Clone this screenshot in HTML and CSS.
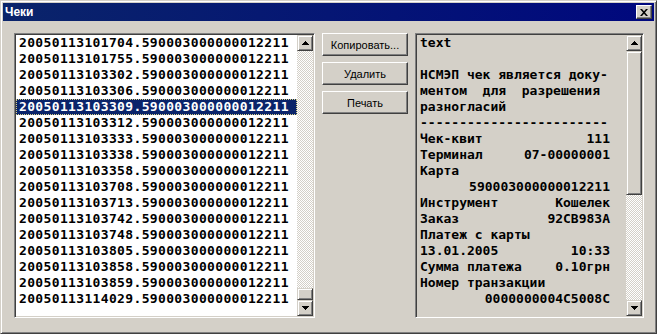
FILE: index.html
```html
<!DOCTYPE html>
<html lang="ru">
<head>
    <meta charset="UTF-8">
    <title>Чеки</title>
    <link rel="stylesheet" href="styles.css">
</head>
<body>
    <div class="window">
        <div class="titlebar">
            <span class="title">Чеки</span>
            <button class="close-btn">
                <svg width="8" height="7" viewBox="0 0 8 7"><path d="M0 0h2l2 2.2L6 0h2L5 3.5 8 7H6L4 4.8 2 7H0l3-3.5z"/></svg>
            </button>
        </div>

        <div class="client">
            <!-- список чеков -->
            <div class="listbox">
                <ul class="items">
                    <li class="item">20050113101704.590003000000012211</li>
                    <li class="item">20050113101755.590003000000012211</li>
                    <li class="item">20050113103302.590003000000012211</li>
                    <li class="item">20050113103306.590003000000012211</li>
                    <li class="item selected">20050113103309.590003000000012211</li>
                    <li class="item">20050113103312.590003000000012211</li>
                    <li class="item">20050113103333.590003000000012211</li>
                    <li class="item">20050113103338.590003000000012211</li>
                    <li class="item">20050113103358.590003000000012211</li>
                    <li class="item">20050113103708.590003000000012211</li>
                    <li class="item">20050113103713.590003000000012211</li>
                    <li class="item">20050113103742.590003000000012211</li>
                    <li class="item">20050113103748.590003000000012211</li>
                    <li class="item">20050113103805.590003000000012211</li>
                    <li class="item">20050113103858.590003000000012211</li>
                    <li class="item">20050113103859.590003000000012211</li>
                    <li class="item">20050113114029.590003000000012211</li>
                </ul>
                <div class="vscroll">
                    <div class="sb-btn"><svg width="7" height="4" viewBox="0 0 7 4"><path d="M3 0h1v1h1v1h1v1h1v1H0V3h1V2h1V1h1z"/></svg></div>
                    <div class="sb-track at-end"><div class="thumb thumb-small"></div></div>
                    <div class="sb-btn"><svg width="7" height="4" viewBox="0 0 7 4"><path d="M0 0h7v1H6v1H5v1H4v1H3V3H2V2H1V1H0z"/></svg></div>
                </div>
            </div>

            <div class="actions">
                <button class="btn">Копировать...</button>
                <button class="btn">Удалить</button>
                <button class="btn">Печать</button>
            </div>

            <!-- текст чека -->
            <div class="memo">
                <div class="memo-text">
                    <div class="line">text</div>
                    <div class="line"></div>
                    <div class="line">НСМЭП чек является доку-</div>
                    <div class="line">ментом  для  разрешения</div>
                    <div class="line">разногласий</div>
                    <div class="line">------------------------</div>
                    <div class="line pair"><span>Чек-квит</span><span>111</span></div>
                    <div class="line pair"><span>Терминал</span><span>07-00000001</span></div>
                    <div class="line">Карта</div>
                    <div class="line right">590003000000012211</div>
                    <div class="line pair"><span>Инструмент</span><span>Кошелек</span></div>
                    <div class="line pair"><span>Заказ</span><span>92CB983A</span></div>
                    <div class="line">Платеж с карты</div>
                    <div class="line pair"><span>13.01.2005</span><span>10:33</span></div>
                    <div class="line pair"><span>Сумма платежа</span><span>0.10грн</span></div>
                    <div class="line">Номер транзакции</div>
                    <div class="line right">0000000004C5008C</div>
                </div>
                <div class="vscroll">
                    <div class="sb-btn"><svg width="7" height="4" viewBox="0 0 7 4"><path d="M3 0h1v1h1v1h1v1h1v1H0V3h1V2h1V1h1z"/></svg></div>
                    <div class="sb-track"><div class="thumb thumb-big"></div></div>
                    <div class="sb-btn"><svg width="7" height="4" viewBox="0 0 7 4"><path d="M0 0h7v1H6v1H5v1H4v1H3V3H2V2H1V1H0z"/></svg></div>
                </div>
            </div>
        </div>
    </div>
</body>
</html>
```

FILE: styles.css
```css
html, body {
    margin: 0;
    padding: 0;
}
body {
    width: 657px;
    height: 334px;
    overflow: hidden;
    background-color: #d4d0c8;
}
.window {
    box-sizing: border-box;
    width: 657px;
    height: 334px;
    padding: 2px;
    background-color: #d4d0c8;
    border: 1px solid;
    border-color: #d4d0c8 #404040 #404040 #d4d0c8;
    box-shadow: inset 1px 1px #fff, inset -1px -1px #808080;
}
.titlebar {
    height: 18px;
    display: flex;
    align-items: center;
    background: linear-gradient(90deg, #0a246a, #00087e);
}
.title {
    padding-left: 2px;
    color: #fff;
    font: bold 12px "Liberation Sans", Arial, sans-serif;
}
.close-btn {
    box-sizing: border-box;
    margin-left: auto;
    margin-right: 2px;
    width: 16px;
    height: 14px;
    padding: 0;
    display: flex;
    align-items: center;
    justify-content: center;
    background-color: #d4d0c8;
    border: 1px solid;
    border-color: #fff #404040 #404040 #fff;
    box-shadow: inset -1px -1px #808080;
}
.client {
    display: flex;
    padding: 12px 10px 0 11px;
}

/* поля со вдавленной рамкой */
.listbox, .memo {
    box-sizing: border-box;
    height: 285px;
    padding: 1px;
    display: flex;
    border: 1px solid;
    border-color: #808080 #fff #fff #808080;
    box-shadow: inset 1px 1px #404040, inset -1px -1px #d4d0c8;
}
.listbox {
    width: 301px;
    background-color: #fff;
}
.items {
    flex: 1;
    list-style: none;
    margin: 0;
    padding: 0;
    overflow: hidden;
}
.item {
    height: 16px;
    line-height: 16px;
    padding-left: 3px;
    white-space: nowrap;
    color: #000;
    font: bold 13px "DejaVu Sans Mono", monospace;
    letter-spacing: 0.35px;
}
.item.selected {
    background-color: #0a246a;
    color: #fff;
    outline: 1px dotted #d8d088;
    outline-offset: -1px;
}

.actions {
    width: 86px;
    margin: 0 7px;
    display: flex;
    flex-direction: column;
    gap: 6px;
}
.btn {
    box-sizing: border-box;
    height: 23px;
    padding: 0;
    background-color: #d4d0c8;
    color: #000;
    font: 11px "Liberation Sans", Arial, sans-serif;
    border: 1px solid;
    border-color: #fff #404040 #404040 #fff;
    box-shadow: inset -1px -1px #808080;
}

.memo {
    width: 229px;
    background-color: #d4d0c8;
}
.memo-text {
    flex: 1;
    padding-left: 3px;
    overflow: hidden;
    color: #000;
    font: bold 13px "DejaVu Sans Mono", monospace;
    line-height: 16px;
}
.line {
    width: 190px;
    height: 16px;
    white-space: pre;
}
.line.pair {
    display: flex;
    justify-content: space-between;
}
.line.right {
    text-align: right;
}

/* полосы прокрутки */
.vscroll {
    width: 16px;
    display: flex;
    flex-direction: column;
}
.sb-btn, .thumb {
    box-sizing: border-box;
    background-color: #d4d0c8;
    border: 1px solid;
    border-color: #d4d0c8 #404040 #404040 #d4d0c8;
    box-shadow: inset 1px 1px #fff, inset -1px -1px #808080;
}
.sb-btn {
    height: 16px;
    display: flex;
    align-items: center;
    justify-content: center;
}
.sb-track {
    flex: 1;
    display: flex;
    flex-direction: column;
    background-color: #d4d0c8;
    background-image: conic-gradient(#fff 0 25%, #d4d0c8 0 50%, #fff 0 75%, #d4d0c8 0);
    background-size: 2px 2px;
}
.sb-track.at-end {
    justify-content: flex-end;
}
.thumb-small {
    height: 12px;
}
.thumb-big {
    height: 144px;
}
```
